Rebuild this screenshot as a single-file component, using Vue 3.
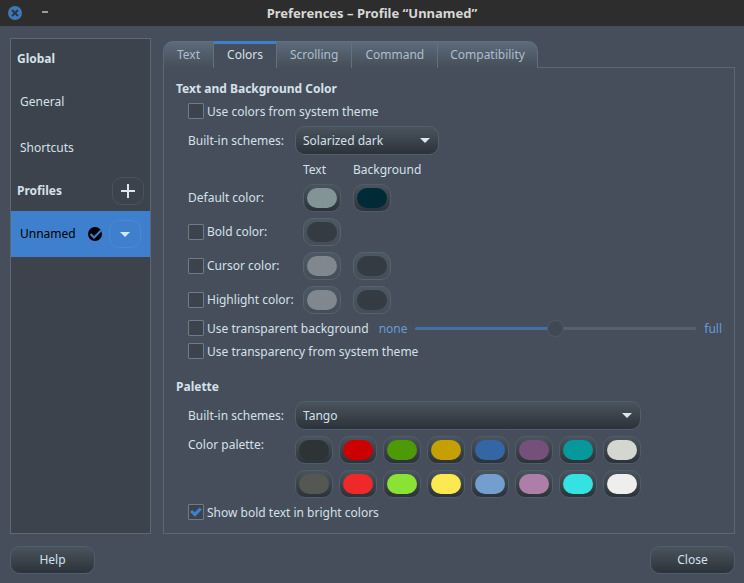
<script setup>
import { ref } from 'vue'

const tabs = ['Text', 'Colors', 'Scrolling', 'Command', 'Compatibility']
const activeTab = ref('Colors')

const textScheme = ref('Solarized dark')
const textSchemes = ['Solarized dark', 'Solarized light', 'Tango dark', 'Custom']
const paletteScheme = ref('Tango')
const paletteSchemes = ['Tango', 'Linux console', 'XTerm', 'Custom']

const useSystem = ref(false)
const useTransparent = ref(false)
const transparency = ref(50)
const systemTransparency = ref(false)
const boldBright = ref(true)

const defaults = ref({ text: '#839496', background: '#002b36' })

const overrides = ref([
  { id: 'bold', label: 'Bold color:', on: false, colors: ['#343b43'] },
  { id: 'cursor', label: 'Cursor color:', on: false, colors: ['#80878e', '#343b43'] },
  { id: 'highlight', label: 'Highlight color:', on: false, colors: ['#80878e', '#343b43'] },
])

const palette = ref([
  '#2e3436', '#cc0000', '#4e9a06', '#c4a000', '#3465a4', '#75507b', '#06989a', '#d3d7cf',
  '#555753', '#ef2929', '#8ae234', '#fce94f', '#729fcf', '#ad7fa8', '#34e2e2', '#eeeeec',
])
</script>

<template>
  <div class="window">
    <header class="titlebar">
      <div class="window-buttons">
        <button class="win-btn" aria-label="Close window">
          <svg width="14" height="14" viewBox="0 0 14 14">
            <circle cx="7" cy="7" r="7" fill="#3d79b9" />
            <path d="M4 4l6 6M10 4l-6 6" stroke="#2d3640" stroke-width="2" />
          </svg>
        </button>
        <button class="win-btn" aria-label="Minimize">
          <svg width="6" height="14" viewBox="0 0 6 14">
            <rect x="0" y="5" width="6" height="2" fill="#9a9a9a" />
          </svg>
        </button>
      </div>
      <h1>Preferences – Profile “Unnamed”</h1>
      <div></div>
    </header>

    <div class="main">
      <nav class="sidebar">
        <h2 class="side-head">Global</h2>
        <a class="side-item" href="#general">General</a>
        <a class="side-item" href="#shortcuts">Shortcuts</a>
        <div class="side-head profiles">
          <h2>Profiles</h2>
          <button class="flat" aria-label="Add profile">
            <svg width="14" height="14" viewBox="0 0 14 14">
              <path d="M7 0v14M0 7h14" stroke="#dbe6f2" stroke-width="2" />
            </svg>
          </button>
        </div>
        <div class="side-item selected">
          <a href="#unnamed">Unnamed</a>
          <svg width="14" height="14" viewBox="0 0 14 14">
            <circle cx="7" cy="7" r="7" fill="#000" />
            <path d="M2.5 7l3.5 3.5L13 3.5" fill="none" stroke="#3e80cd" stroke-width="2" />
          </svg>
          <button class="flat" aria-label="Profile menu">
            <svg width="10" height="5" viewBox="0 0 10 5">
              <path d="M0 0h10L5 5z" fill="#dbe6f2" />
            </svg>
          </button>
        </div>
      </nav>

      <section class="notebook">
        <div class="tabs" role="tablist">
          <button
            v-for="tab in tabs"
            :key="tab"
            class="tab"
            :class="{ active: tab === activeTab }"
            role="tab"
            :aria-selected="tab === activeTab"
            @click="activeTab = tab"
          >{{ tab }}</button>
          <span class="tab-rest"></span>
        </div>

        <div class="panel">
          <div class="group">
            <h3>Text and Background Color</h3>
            <label class="check"><input v-model="useSystem" type="checkbox" />Use colors from system theme</label>
            <div class="row">
              <label for="text-scheme">Built-in schemes:</label>
              <span class="combo short">
                <select id="text-scheme" v-model="textScheme">
                  <option v-for="s in textSchemes" :key="s">{{ s }}</option>
                </select>
                <svg width="10" height="5" viewBox="0 0 10 5"><path d="M0 0h10L5 5z" fill="#dbe6f2" /></svg>
              </span>
            </div>
            <div class="row">
              <span></span>
              <div class="pair heads"><span>Text</span><span>Background</span></div>
            </div>
            <div class="row">
              <label for="default-text">Default color:</label>
              <div class="pair">
                <input id="default-text" v-model="defaults.text" class="swatch" type="color" />
                <input v-model="defaults.background" class="swatch" type="color" aria-label="Default background" />
              </div>
            </div>
            <div v-for="o in overrides" :key="o.id" class="row">
              <label class="check"><input v-model="o.on" type="checkbox" />{{ o.label }}</label>
              <div class="pair">
                <input
                  v-for="(c, i) in o.colors"
                  :key="i"
                  v-model="o.colors[i]"
                  class="swatch"
                  type="color"
                  :disabled="!o.on"
                  :aria-label="o.id + (i ? ' background' : ' text')"
                />
              </div>
            </div>
            <div class="transparent">
              <label class="check"><input v-model="useTransparent" type="checkbox" />Use transparent background</label>
              <span class="end">none</span>
              <input v-model="transparency" class="slider" type="range" min="0" max="100" disabled aria-label="Transparency" />
              <span class="end">full</span>
            </div>
            <label class="check"><input v-model="systemTransparency" type="checkbox" />Use transparency from system theme</label>
          </div>

          <div class="group">
            <h3>Palette</h3>
            <div class="row">
              <label for="palette-scheme">Built-in schemes:</label>
              <span class="combo long">
                <select id="palette-scheme" v-model="paletteScheme">
                  <option v-for="s in paletteSchemes" :key="s">{{ s }}</option>
                </select>
                <svg width="10" height="5" viewBox="0 0 10 5"><path d="M0 0h10L5 5z" fill="#dbe6f2" /></svg>
              </span>
            </div>
            <div class="row top">
              <span>Color palette:</span>
              <div class="palette">
                <input
                  v-for="(c, i) in palette"
                  :key="i"
                  v-model="palette[i]"
                  class="swatch"
                  type="color"
                  :aria-label="'Palette entry ' + i"
                />
              </div>
            </div>
            <label class="check"><input v-model="boldBright" type="checkbox" />Show bold text in bright colors</label>
          </div>
        </div>
      </section>
    </div>

    <footer class="actions">
      <button class="push">Help</button>
      <button class="push">Close</button>
    </footer>
  </div>
</template>

<style>
body {
  background: #454e5a;
}
</style>

<style scoped>
* {
  box-sizing: border-box;
}

.window {
  display: flex;
  flex-direction: column;
  min-height: 100vh;
  background: #454e5a;
  color: #d5e0ea;
  font-family: "Noto Sans", sans-serif;
  font-size: 12px;
  line-height: 18px;
}

h1,
h2,
h3 {
  margin: 0;
  font-size: inherit;
  font-weight: 700;
}

button,
input,
select {
  margin: 0;
  padding: 0;
  border: 0;
  background: none;
  color: inherit;
  font: inherit;
}

a {
  color: inherit;
  text-decoration: none;
}

svg {
  display: block;
  flex: none;
}

.titlebar {
  display: grid;
  grid-template-columns: 1fr auto 1fr;
  align-items: center;
  height: 26px;
  padding: 0 8px;
  background: #2d2d2d;
  color: #d8d8d8;
}

.titlebar h1 {
  font-size: 13px;
}

.window-buttons {
  display: flex;
  align-items: center;
  gap: 20px;
}

.main {
  display: flex;
  flex: 1;
  gap: 12px;
  padding: 12px 9px 12px 10px;
}

.sidebar {
  flex: none;
  width: 141px;
  border: 1px solid #5c6873;
  background: #3c434c;
}

.side-head {
  padding: 11px 6px 10px;
}

.side-head.profiles {
  display: flex;
  align-items: center;
  justify-content: space-between;
  height: 41px;
  padding: 0 6px;
}

.side-item {
  display: flex;
  align-items: center;
  height: 46px;
  padding: 2px 9px 0;
}

.side-item.selected {
  gap: 7px;
  padding-top: 0;
  background: #3e80cd;
  color: #000;
}

.side-item.selected a {
  flex: 1;
}

.flat {
  display: grid;
  place-items: center;
  flex: none;
  width: 32px;
  height: 28px;
  border: 1px solid #4a5560;
  border-radius: 10px;
}

.selected .flat {
  border-color: #4c89cf;
}

.notebook {
  display: flex;
  flex: 1;
  flex-direction: column;
  min-width: 0;
  padding-top: 3px;
}

.tabs {
  display: flex;
  height: 27px;
}

.tab {
  padding: 0 13px;
  border-top: 1px solid #63717f;
  border-right: 1px solid #63707d;
  background: linear-gradient(#5c6a7a, #454e58);
  color: #aebdcd;
}

.tab:first-child {
  border-left: 1px solid #5c6873;
  border-top-left-radius: 10px;
}

.tab:nth-last-child(2) {
  padding: 0 12px;
  border-top-right-radius: 10px;
}

.tab.active {
  border-top: 0;
  background: linear-gradient(#3e80cd 3px, #454e5a 3px);
  color: #d5e0ea;
}

.tab-rest {
  flex: 1;
  border-bottom: 1px solid #5c6873;
}

.panel {
  display: flex;
  flex: 1;
  flex-direction: column;
  gap: 18px;
  padding: 12px;
  border: 1px solid #5c6873;
  border-top: 0;
}

.group {
  display: flex;
  flex-direction: column;
  gap: 6px;
  padding-left: 12px;
}

.group h3 {
  margin-left: -12px;
  line-height: 17px;
}

.check {
  display: flex;
  align-items: flex-start;
  gap: 3px;
  height: 17px;
  line-height: 17px;
  white-space: nowrap;
}

.row .check {
  height: 16px;
  line-height: 16px;
}

.check input {
  appearance: none;
  display: grid;
  place-items: center;
  flex: none;
  width: 16px;
  height: 16px;
  border: 1px solid #6f7b87;
  border-radius: 1px;
  background: #3c434c;
}

.check input:checked::before {
  content: "";
  width: 12px;
  height: 10px;
  background: #3e80cd;
  clip-path: polygon(0 50%, 17% 30%, 40% 52%, 80% 4%, 100% 24%, 42% 98%);
}

.row {
  display: grid;
  grid-template-columns: 107px 1fr;
  align-items: center;
}

.row.top {
  align-items: start;
}

.combo {
  display: grid;
  align-items: center;
}

.combo > * {
  grid-area: 1 / 1;
}

.combo svg {
  justify-self: end;
  margin-right: 9px;
  pointer-events: none;
}

.combo.short {
  width: 144px;
}

.combo.long {
  width: 100%;
  max-width: 346px;
}

select,
.push {
  height: 28px;
  border: 1px solid #4f5f6d;
  border-radius: 10px;
  background: linear-gradient(#4a545d, #2c3239);
}

select {
  appearance: none;
  width: 100%;
  height: 29px;
  padding: 0 24px 0 7px;
}

.pair {
  display: flex;
  gap: 12px;
  padding-left: 8px;
}

.heads {
  line-height: 17px;
}

.heads span:first-child {
  width: 38px;
}

.swatch {
  appearance: none;
  display: block;
  width: 38px;
  height: 28px;
  padding: 3px;
  border: 1px solid #4f5d69;
  border-radius: 10px;
  background: linear-gradient(#4a545d, #2c3239);
}

.swatch::-webkit-color-swatch-wrapper {
  padding: 0;
}

.swatch::-webkit-color-swatch {
  border: 0;
  border-radius: 10px;
}

.swatch:disabled {
  border-color: #56636e;
  background: linear-gradient(#4b5762, #444e57);
}

.transparent {
  display: flex;
  align-items: center;
}

.transparent .check {
  margin-right: 10px;
}

.end {
  height: 17px;
  line-height: 17px;
  color: #659bd8;
}

.slider {
  appearance: none;
  flex: 1;
  min-width: 0;
  height: 16px;
  margin: 0 8px 0 7px;
}

.slider::-webkit-slider-runnable-track {
  height: 3px;
  border-radius: 2px;
  background: linear-gradient(90deg, #4470a4 50%, #56616c 50%);
}

.slider::-webkit-slider-thumb {
  appearance: none;
  width: 17px;
  height: 17px;
  margin-top: -7px;
  border: 1px solid #505c67;
  border-radius: 50%;
  background: #404952;
}

.palette {
  display: grid;
  grid-template-columns: repeat(8, 38px);
  gap: 6px;
}

.actions {
  display: flex;
  justify-content: space-between;
  padding: 0 9px 9px 10px;
}

.push {
  width: 85px;
}
</style>
